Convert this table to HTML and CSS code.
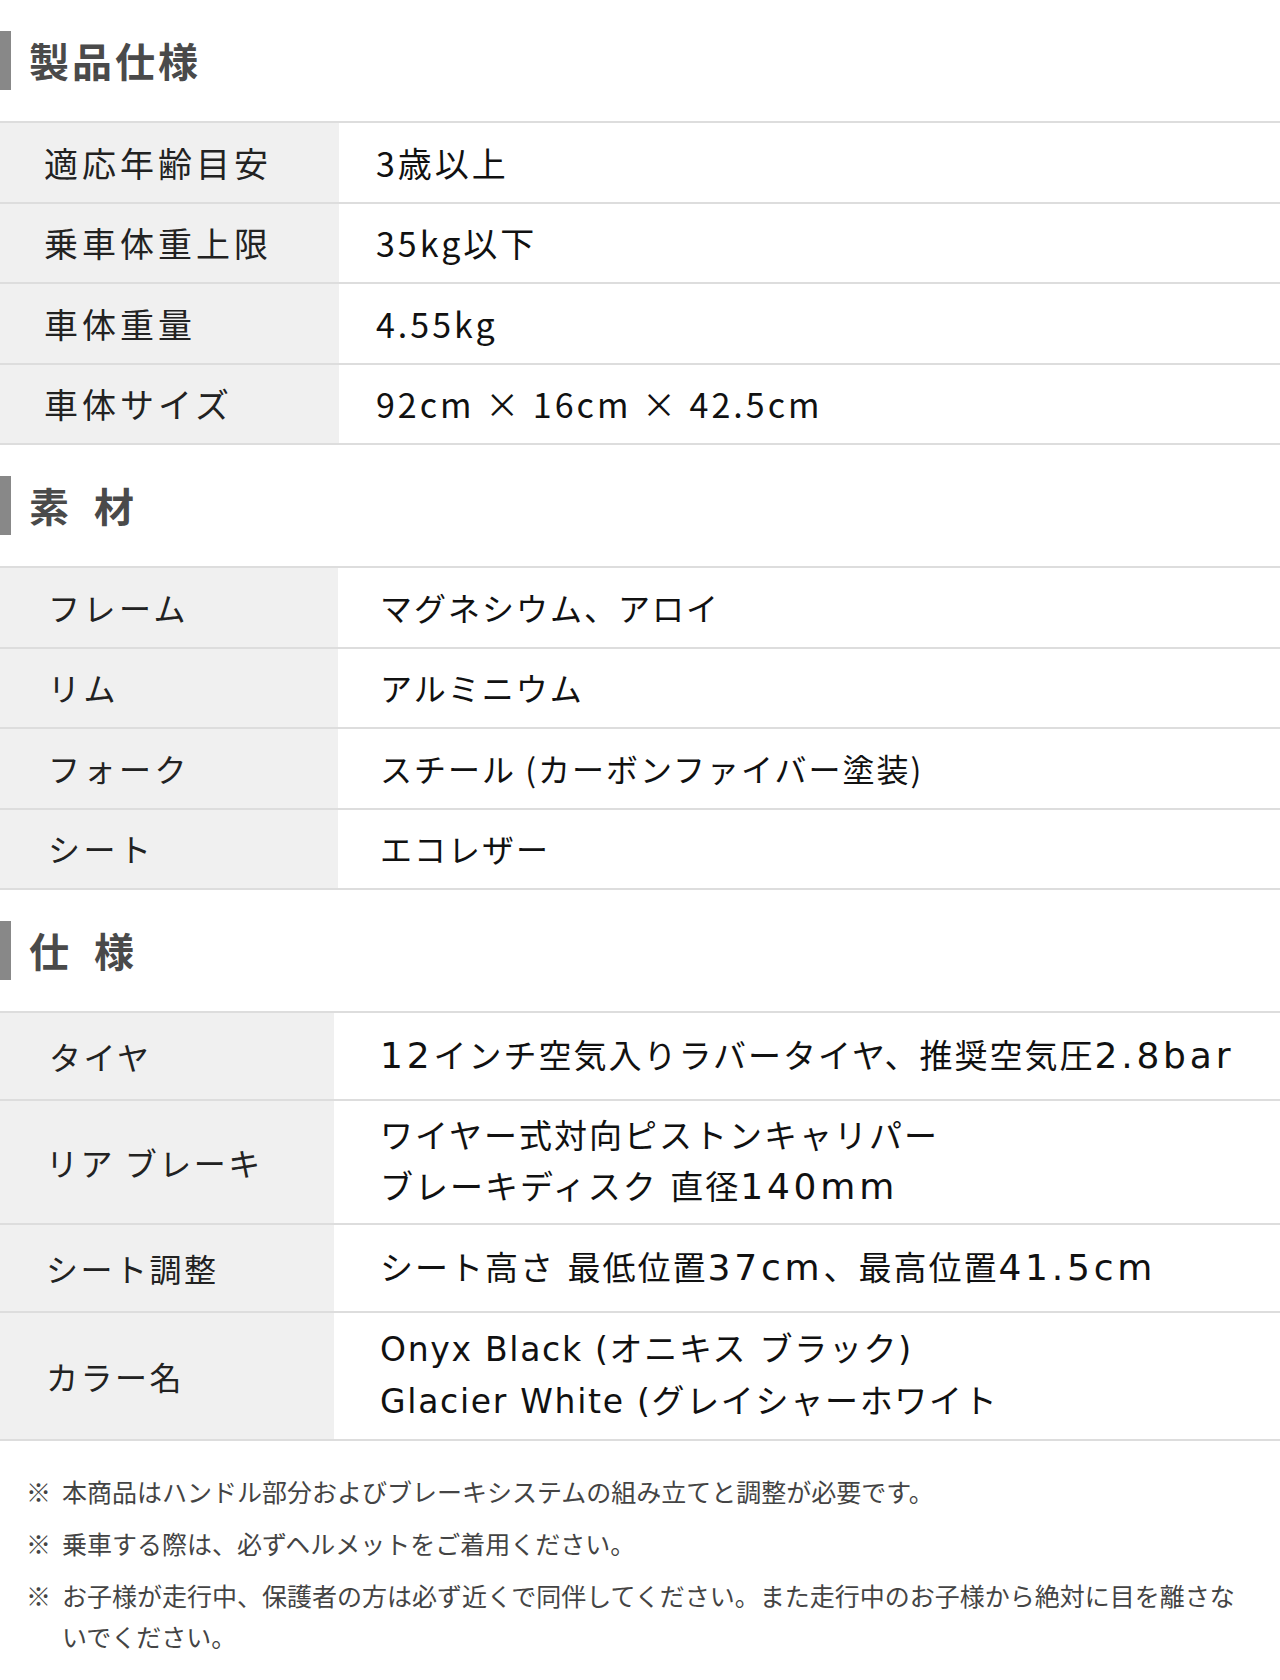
FILE: index.html
```html
<!DOCTYPE html>
<html lang="ja">
<head>
<meta charset="utf-8">
<title>製品仕様</title>
<link rel="stylesheet" href="styles.css">
</head>
<body>
<main class="page">
  <section class="section">
    <h2 class="heading">製品仕様</h2>
    <div class="table table-a">
      <div class="row"><div class="label">適応年齢目安</div><div class="value">3歳以上</div></div>
      <div class="row"><div class="label">乗車体重上限</div><div class="value">35kg以下</div></div>
      <div class="row"><div class="label">車体重量</div><div class="value">4.55kg</div></div>
      <div class="row"><div class="label">車体サイズ</div><div class="value">92cm × 16cm × 42.5cm</div></div>
    </div>
  </section>

  <section class="section">
    <h2 class="heading heading-spaced">素 材</h2>
    <div class="table table-b">
      <div class="row"><div class="label">フレーム</div><div class="value">マグネシウム、アロイ</div></div>
      <div class="row"><div class="label">リム</div><div class="value">アルミニウム</div></div>
      <div class="row"><div class="label">フォーク</div><div class="value">スチール (カーボンファイバー塗装)</div></div>
      <div class="row"><div class="label">シート</div><div class="value">エコレザー</div></div>
    </div>
  </section>

  <section class="section">
    <h2 class="heading heading-spaced">仕 様</h2>
    <div class="table table-c">
      <div class="row"><div class="label label-tire">タイヤ</div><div class="value"><span class="num">12</span>インチ空気入りラバータイヤ、推奨空気圧<span class="num">2.8bar</span></div></div>
      <div class="row"><div class="label">リア ブレーキ</div><div class="value">ワイヤー式対向ピストンキャリパー<br>ブレーキディスク 直径<span class="num">140mm</span></div></div>
      <div class="row"><div class="label">シート調整</div><div class="value">シート高さ 最低位置<span class="num">37cm</span>、最高位置<span class="num">41.5cm</span></div></div>
      <div class="row row-tall"><div class="label">カラー名</div><div class="value">Onyx Black (オニキス ブラック)<br>Glacier White (グレイシャーホワイト</div></div>
    </div>
  </section>

  <ul class="notes">
    <li class="note"><span class="mark">※</span><span class="note-text">本商品はハンドル部分およびブレーキシステムの組み立てと調整が必要です。</span></li>
    <li class="note"><span class="mark">※</span><span class="note-text">乗車する際は、必ずヘルメットをご着用ください。</span></li>
    <li class="note"><span class="mark">※</span><span class="note-text">お子様が走行中、保護者の方は必ず近くで同伴してください。また走行中のお子様から絶対に目を離さないでください。</span></li>
  </ul>
</main>
</body>
</html>
```

FILE: styles.css
```css
* { box-sizing: border-box; }

html, body {
  margin: 0;
  padding: 0;
  background: #ffffff;
}

body {
  font-family: "Noto Sans CJK JP", "Noto Sans", sans-serif;
  color: #111111;
}

.page {
  width: 1280px;
}

.heading {
  margin: 31px 0;
  height: 59px;
  border-left: 11px solid #888888;
  padding-left: 18px;
  font-size: 40px;
  line-height: 59px;
  font-weight: 700;
  letter-spacing: 3px;
  color: #4a4a4a;
}

.heading-spaced {
  word-spacing: 10px;
}

.table {
  border-top: 2px solid #dddddd;
}

.row {
  display: flex;
  min-height: 80.5px;
  border-bottom: 2px solid #dddddd;
}

.label {
  flex: 0 0 339px;
  display: flex;
  align-items: center;
  background: #f0f0f0;
  padding-left: 44px;
  color: #222222;
}

.value {
  flex: 1 1 auto;
  display: flex;
  align-items: center;
  color: #111111;
}

.table-a .label,
.table-a .value {
  font-size: 34px;
  letter-spacing: 3px;
  line-height: 51px;
}

.table-a .label {
  letter-spacing: 4px;
}

.table-a .value {
  padding-left: 37px;
}

.table-b .label {
  flex-basis: 338px;
  padding-left: 48px;
}

.table-b .label,
.table-b .value {
  font-size: 32px;
  letter-spacing: 2px;
  line-height: 51px;
}

.table-b .label {
  letter-spacing: 3.5px;
}

.table-b .value {
  padding-left: 42px;
}

.table-c .row {
  min-height: 88px;
}

.table-c .label {
  flex-basis: 334px;
  padding-left: 46px;
  font-size: 32px;
  letter-spacing: 2.5px;
  line-height: 51px;
  padding-top: 10px;
  padding-bottom: 10px;
}

.table-c .label-tire {
  padding-left: 49px;
}

.table-c .value {
  display: block;
  align-self: center;
  padding: 10px 0 10px 46px;
  font-family: "DejaVu Sans", "Noto Sans CJK JP", sans-serif;
  font-size: 33px;
  letter-spacing: 2px;
  line-height: 51px;
}

.table-c .num {
  font-size: 36px;
  letter-spacing: 3.8px;
  line-height: 1;
}

.table-c .row-tall .value {
  line-height: 52px;
  letter-spacing: 1.7px;
}

.table-c .row-tall {
  min-height: 128px;
}

.notes {
  list-style: none;
  margin: 0;
  padding: 30px 30px 20px 26px;
}

.note {
  display: flex;
  font-size: 25px;
  line-height: 41px;
  color: #444444;
  margin-bottom: 11px;
}

.mark {
  flex: 0 0 36px;
}

.note-text {
  flex: 1 1 auto;
}
```
